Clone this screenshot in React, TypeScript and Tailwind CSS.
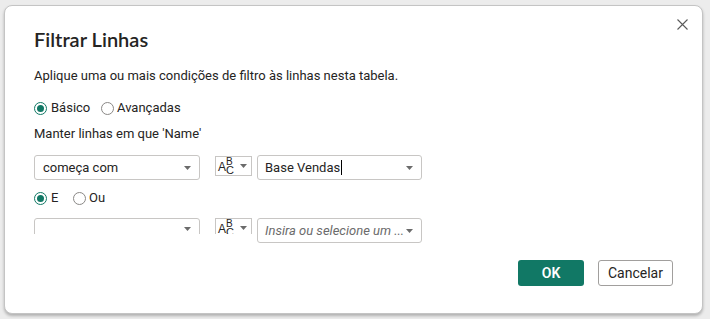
const body = "font-['Roboto','Liberation_Sans',sans-serif]";

function Arrow() {
  return (
    <svg width="7" height="4" viewBox="0 0 7 4" className="shrink-0">
      <path d="M0 0 H7 L3.5 4 Z" fill="#6b6b6b" />
    </svg>
  );
}

function Radio({ checked }: { checked: boolean }) {
  return checked ? (
    <span className="flex h-[13px] w-[13px] shrink-0 items-center justify-center rounded-full border border-[#117865]">
      <span className="h-[7px] w-[7px] rounded-full bg-[#117865]" />
    </span>
  ) : (
    <span className="h-[13px] w-[13px] shrink-0 rounded-full border border-[#8a8886]" />
  );
}

function AbcBox() {
  return (
    <div className="flex h-[20px] w-[37px] shrink-0 items-center border border-[#c8c6c4] bg-white pl-[2px] pr-[4px]">
      <span className="relative flex h-[18px] w-[22px] text-[#252423] font-['Liberation_Sans',sans-serif]">
        <span className="absolute left-[0px] top-[4px] text-[12px] leading-none">A</span>
        <span className="absolute left-[8px] top-[0px] text-[10px] leading-none">B</span>
        <span className="absolute left-[8px] top-[8px] text-[11px] leading-none">C</span>
      </span>
      <span className="ml-auto">
        <Arrow />
      </span>
    </div>
  );
}

export default function App() {
  return (
    <div className={`h-[319px] w-[710px] overflow-hidden bg-[#ececec] pl-[4px] pt-[5px] ${body}`}>
      <div className="relative flex h-[309px] w-[699px] flex-col rounded-[8px] border border-[#c4c4c4] bg-white pl-[29px] pr-[29px] pt-[19px] text-[#252423] shadow-[0_2px_3px_rgba(0,0,0,0.25)]">
        <button className="absolute right-[10px] top-[8px] flex h-[20px] w-[20px] items-center justify-center">
          <svg width="11" height="11" viewBox="0 0 11 11">
            <path d="M0.5 0.5 L10.5 10.5 M10.5 0.5 L0.5 10.5" stroke="#5a5a5a" strokeWidth="1.1" />
          </svg>
        </button>

        <h1 className="h-[28px] text-[20px] font-semibold leading-[28px] font-['Lato',sans-serif] text-[#252423]">
          Filtrar Linhas
        </h1>

        <p className="mt-[14px] h-[18px] text-[13px] leading-[18px]">
          Aplique uma ou mais condições de filtro às linhas nesta tabela.
        </p>

        <div className="mt-[14px] flex h-[18px] items-center text-[13px] leading-[18px]">
          <div className="flex w-[67px] items-center gap-[4px]">
            <Radio checked />
            <span>Básico</span>
          </div>
          <div className="flex items-center gap-[3px]">
            <Radio checked={false} />
            <span>Avançadas</span>
          </div>
        </div>

        <p className="mt-[8px] h-[18px] text-[13px] leading-[18px]">Manter linhas em que 'Name'</p>

        <div className="mt-[12px] flex items-start">
          <div className="flex h-[25px] w-[166px] items-center rounded-[3px] border border-[#c8c6c4] pl-[8px] pr-[8px] text-[13px]">
            <span>começa com</span>
            <span className="ml-auto">
              <Arrow />
            </span>
          </div>
          <div className="ml-[15px] mt-[1px]">
            <AbcBox />
          </div>
          <div className="ml-[5px] flex h-[25px] w-[165px] items-center rounded-[3px] border border-[#c8c6c4] pl-[7px] pr-[8px] text-[13px]">
            <span>Base Vendas</span>
            <span className="ml-[1px] h-[15px] w-[1px] bg-black" />
            <span className="ml-auto">
              <Arrow />
            </span>
          </div>
        </div>

        <div className="mt-[9px] flex h-[18px] items-center text-[13px] leading-[18px]">
          <div className="flex w-[39px] items-center gap-[4px]">
            <Radio checked />
            <span>E</span>
          </div>
          <div className="flex items-center gap-[3px]">
            <Radio checked={false} />
            <span>Ou</span>
          </div>
        </div>

        <div className="mt-[11px] flex items-start">
          <div className="h-[16px] w-[166px] overflow-hidden">
            <div className="flex h-[25px] w-[166px] items-center rounded-[3px] border border-[#c8c6c4] pl-[8px] pr-[8px] pb-[3px]">
              <span className="ml-auto">
                <Arrow />
              </span>
            </div>
          </div>
          <div className="ml-[15px] h-[16px] overflow-hidden">
            <AbcBox />
          </div>
          <div className="ml-[5px] flex h-[25px] w-[165px] items-center rounded-[3px] border border-[#c8c6c4] pl-[7px] pr-[8px] text-[13px]">
            <span className="italic text-[#6b6b6b]">Insira ou selecione um ...</span>
            <span className="ml-auto">
              <Arrow />
            </span>
          </div>
        </div>

        <div className="mt-auto mb-[27px] flex justify-end gap-[14px]">
          <button className="h-[26px] w-[66px] rounded-[3px] bg-[#117865] text-[14px] font-semibold text-white">
            OK
          </button>
          <button className="h-[26px] w-[75px] rounded-[3px] border border-[#a19f9d] bg-white text-[14px] text-[#252423]">
            Cancelar
          </button>
        </div>
      </div>
    </div>
  );
}
